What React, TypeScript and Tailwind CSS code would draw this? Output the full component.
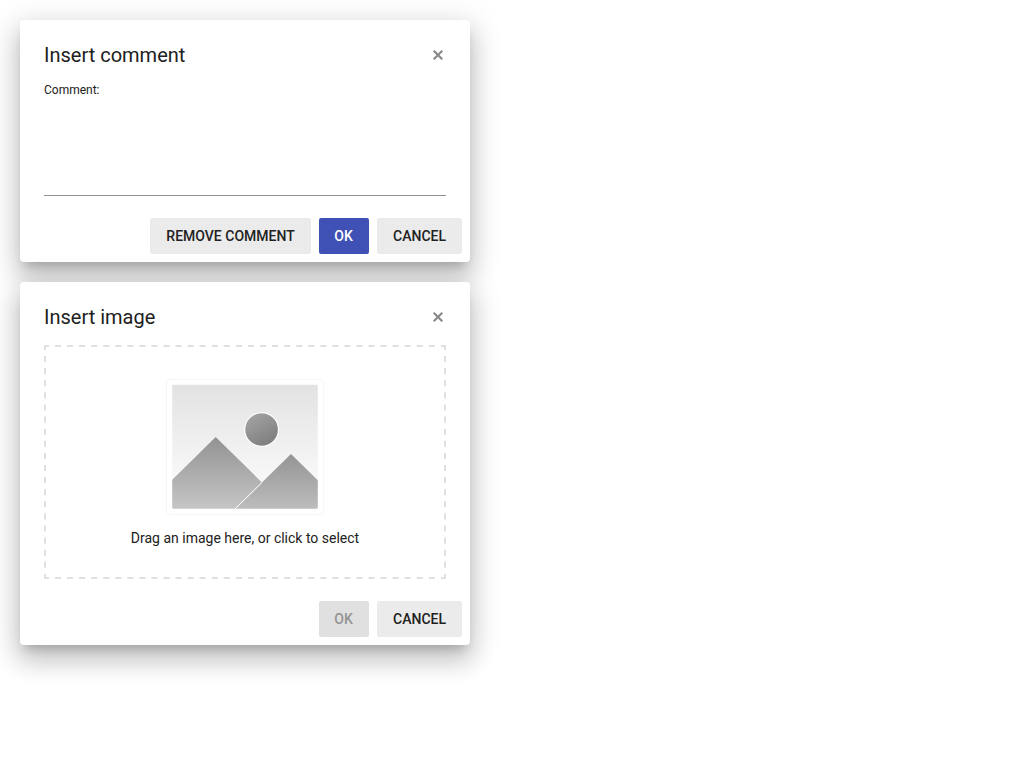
import type { ReactNode } from "react";

type ButtonProps = {
  children: ReactNode;
  variant?: "default" | "primary" | "disabled";
};

const variants = {
  default: "bg-[#ebebeb] text-[#212121]",
  primary: "bg-[#3f51b5] text-white",
  disabled: "bg-[#e0e0e0] text-[#939393]",
};

function Button({ children, variant = "default" }: ButtonProps) {
  return (
    <button
      type="button"
      disabled={variant === "disabled"}
      className={`h-9 rounded-[2px] text-sm font-medium uppercase leading-9 ${variants[variant]} ${
        variant === "default" ? "px-4" : "w-[50px] pr-px text-center"
      }`}
    >
      {children}
    </button>
  );
}

function CloseIcon() {
  return (
    <svg width="10" height="10" viewBox="0 0 10 10" className="mr-[3px]">
      <path d="M0.700 0.700L9.300 9.300M9.300 0.700L0.700 9.300" stroke="#888" strokeWidth="2.100" fill="none" />
    </svg>
  );
}

type DialogProps = { title: string; children: ReactNode; actions: ReactNode; className: string };

function Dialog({ title, children, actions, className }: DialogProps) {
  return (
    <section
      className={`flex w-[450px] flex-col rounded-[4px] bg-white shadow-[0_8px_10px_-5px_rgba(0,0,0,0.2),0_16px_24px_2px_rgba(0,0,0,0.14),0_6px_30px_5px_rgba(0,0,0,0.12)] ${className}`}
    >
      <header className="flex items-center justify-between px-6 pt-5">
        <h2 className="text-xl leading-[30px]">{title}</h2>
        <button type="button" aria-label="Close">
          <CloseIcon />
        </button>
      </header>
      <div className="flex-1 px-6">{children}</div>
      <footer className="flex justify-end gap-2 p-2">{actions}</footer>
    </section>
  );
}

function DashedOutline() {
  return (
    <svg
      width="402"
      height="234"
      viewBox="0 0 402 234"
      className="pointer-events-none absolute inset-0"
      fill="none"
      stroke="#e0e0e0"
      strokeWidth="2"
    >
      <path d="M0 1H402M0 233H402" strokeDasharray="6 6.060" strokeDashoffset="1.060" />
      <path d="M1 0V234M401 0V234" strokeDasharray="6 6.110" strokeDashoffset="1.110" />
    </svg>
  );
}

function Placeholder() {
  return (
    <svg width="160" height="138" viewBox="0 0 160 138">
      <defs>
        <linearGradient id="sky" x1="0" y1="0" x2="0" y2="1">
          <stop offset="0" stopColor="#e2e2e2" />
          <stop offset="1" stopColor="#ffffff" />
        </linearGradient>
        <linearGradient id="leftPeak" x1="0" y1="0" x2="0" y2="1">
          <stop offset="0" stopColor="#929292" />
          <stop offset="1" stopColor="#c6c6c6" />
        </linearGradient>
        <linearGradient id="rightPeak" x1="0" y1="0" x2="0" y2="1">
          <stop offset="0" stopColor="#949494" />
          <stop offset="1" stopColor="#bdbdbd" />
        </linearGradient>
        <linearGradient id="sun" x1="0.2" y1="0" x2="0.8" y2="1">
          <stop offset="0" stopColor="#a4a4a4" />
          <stop offset="1" stopColor="#7b7b7b" />
        </linearGradient>
        <clipPath id="frame">
          <rect x="7.200" y="6.800" width="145.600" height="124" rx="1.200" />
        </clipPath>
      </defs>
      <rect x="1.500" y="1.500" width="157" height="135" rx="3.500" fill="#fff" stroke="#f6f6f6" />
      <g clipPath="url(#frame)">
        <rect x="7" y="6" width="146" height="125" fill="url(#sky)" />
        <path d="M7 102L50.700 59L97 104.500L70 131H7Z" fill="url(#leftPeak)" />
        <path d="M70 131L126 76L153 102.500V131Z" fill="url(#rightPeak)" />
        <path d="M70 131L97 104.500" stroke="#fff" strokeWidth="1" />
        <circle cx="96.600" cy="51.500" r="16.900" fill="url(#sun)" stroke="#fff" strokeWidth="1.200" />
      </g>
    </svg>
  );
}

export default function App() {
  return (
    <main className="flex min-h-screen flex-col gap-5 bg-white p-5 font-['Roboto',sans-serif] text-[#212121]">
      <Dialog
        title="Insert comment"
        className="h-[242px]"
        actions={
          <>
            <div className="flex w-[161px] flex-col">
              <Button>Remove comment</Button>
            </div>
            <Button variant="primary">OK</Button>
            <Button>Cancel</Button>
          </>
        }
      >
        <label className="mt-[11px] block">
          <span className="block text-xs leading-[18px]">Comment:</span>
          <textarea className="mt-[1px] block h-[96px] w-full resize-none border-b border-[#909090] bg-transparent text-sm outline-none" />
        </label>
      </Dialog>
      <Dialog
        title="Insert image"
        className="h-[363px]"
        actions={
          <>
            <Button variant="disabled">OK</Button>
            <Button>Cancel</Button>
          </>
        }
      >
        <div className="relative mt-[13px] flex h-[234px] flex-col items-center pt-[33px]">
          <DashedOutline />
          <Placeholder />
          <p className="mt-3 text-sm leading-5">Drag an image here, or click to select</p>
        </div>
      </Dialog>
    </main>
  );
}
